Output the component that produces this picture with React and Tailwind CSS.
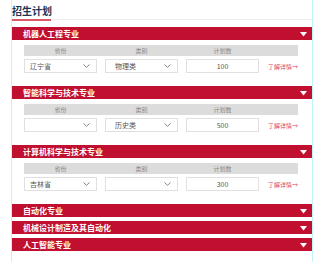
const sections = [
    { name: '机器人工程专业', open: true, province: '辽宁省', type: '物理类', count: '100' },
    { name: '智能科学与技术专业', open: true, province: '', type: '历史类', count: '500' },
    { name: '计算机科学与技术专业', open: true, province: '吉林省', type: '', count: '300' },
    { name: '自动化专业', open: false },
    { name: '机械设计制造及其自动化', open: false },
    { name: '人工智能专业', open: false },
];

const Chevron = () => (
    <svg width="7" height="4" viewBox="0 0 7 4" className="shrink-0">
        <path d="M0.5 0.5 L3.5 3.3 L6.5 0.5" fill="none" stroke="#777" strokeWidth="0.9" />
    </svg>
);

const Section = ({ s }) => (
    <div className="mb-[4px]">
        <div className="h-[13px] bg-[#c1102f] flex items-center justify-between pl-[11px] pr-[5px]">
            <span className="text-white text-[8px] leading-[10px] font-semibold">{s.name}</span>
            <svg width="7" height="5" viewBox="0 0 7 5" className="mt-[2px]">
                <path d="M0 0 H7 L3.5 4.5 Z" fill="#fff" />
            </svg>
        </div>
        {s.open && (
            <div className="pl-[12px] pt-[5px] pb-[9px]">
                <div className="w-[274px] h-[11px] bg-[#dcdcdc] flex gap-[8px] text-[6px] leading-[11px] text-[#888]">
                    <div className="w-[73px] text-center">省份</div>
                    <div className="w-[73px] text-center">类别</div>
                    <div className="w-[73px] text-center">计划数</div>
                </div>
                <div className="mt-[3px] flex items-center gap-[8px] text-[7px] text-[#555]">
                    <div className="w-[73px] h-[14px] border border-[#e0e0e0] flex items-center justify-between pl-[5px] pr-[6px]">
                        <span>{s.province}</span>
                        <Chevron />
                    </div>
                    <div className="w-[73px] h-[14px] border border-[#e0e0e0] flex items-center justify-between pl-[9px] pr-[6px]">
                        <span>{s.type}</span>
                        <Chevron />
                    </div>
                    <div className="w-[73px] h-[14px] border border-[#e0e0e0] flex items-center justify-center">
                        <span>{s.count}</span>
                    </div>
                    <span className="ml-[1px] text-[6px] text-[#e0405a]">了解详情→</span>
                </div>
            </div>
        )}
    </div>
);

export default function App() {
    return (
        <div className="w-[320px] h-[262px] bg-white overflow-hidden font-['Noto_Sans_CJK_SC','Noto_Sans',sans-serif]">
            <div className="ml-[11px] w-[302px] h-full border-x border-[#c3f4f6]">
                <h2 className="pt-[4px] text-[10px] leading-[13px] font-bold text-[#1d3557]">招生计划</h2>
                <div className="mt-[2px] h-[1px] bg-[#eeeeee]">
                    <div className="w-[39px] h-[2px] bg-[#d9596b]" />
                </div>
                <div className="mt-[7px]">
                    {sections.map((s) => (
                        <Section key={s.name} s={s} />
                    ))}
                </div>
            </div>
        </div>
    );
}
